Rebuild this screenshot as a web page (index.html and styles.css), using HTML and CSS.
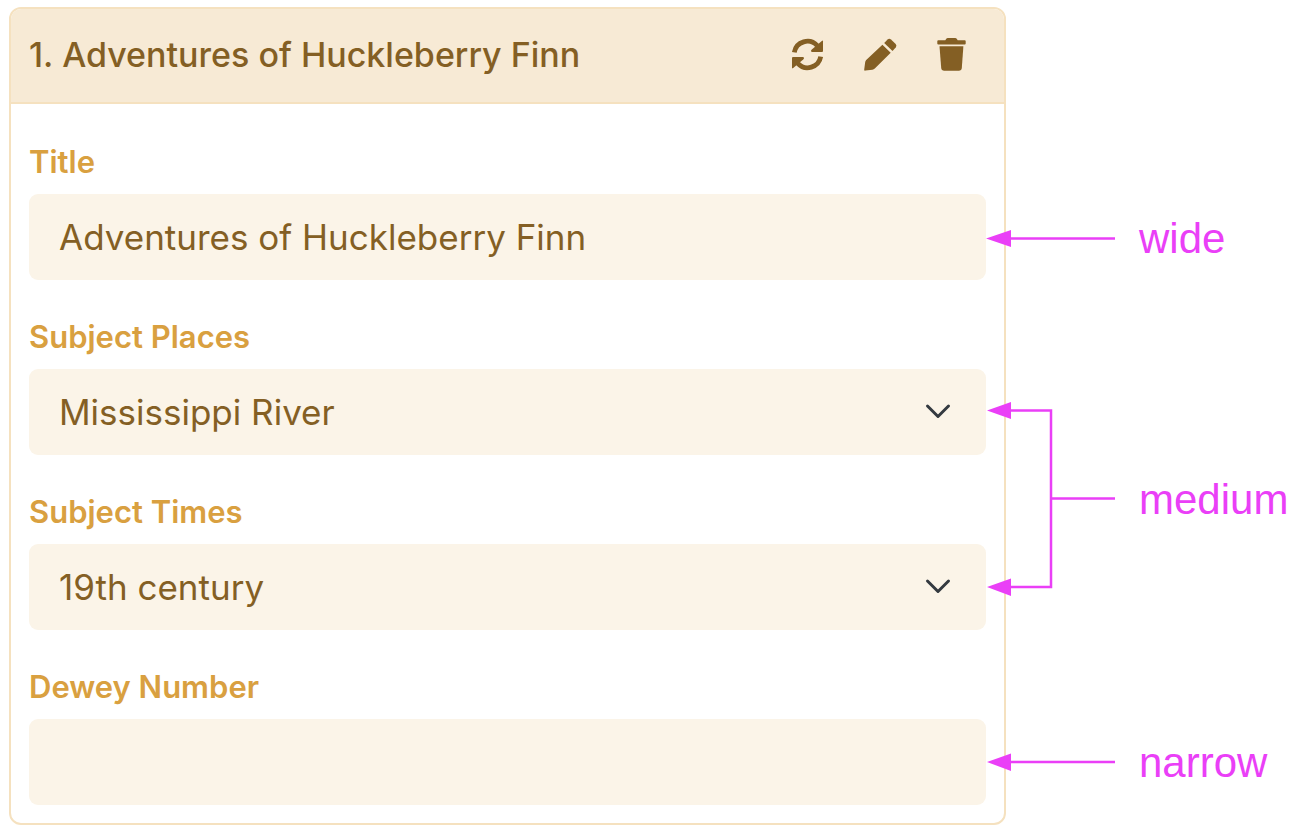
FILE: index.html
```html
<!DOCTYPE html>
<html lang="en">
<head>
<meta charset="utf-8">
<title>Adventures of Huckleberry Finn</title>
<link rel="stylesheet" href="styles.css">
</head>
<body>
<main class="page">
  <section class="card">
    <header class="card-header">
      <h1 class="card-title">1. Adventures of Huckleberry Finn</h1>
      <div class="actions">
        <button class="action" type="button" aria-label="Refresh">
          <svg viewBox="0 0 36 36" aria-hidden="true">
            <path d="M4.3 15.3A13.3 13.3 0 0 1 27.2 8.6" fill="none" stroke="currentColor" stroke-width="4.8"/>
            <path d="M31.8 4Q33 3 33 4.400V14Q33 15 32 15H22.4Q21 15 21 14Q21 13.400 21.800 12.600Z"/>
            <g transform="rotate(180 17.5 17.5)">
              <path d="M4.3 15.3A13.3 13.3 0 0 1 27.2 8.6" fill="none" stroke="currentColor" stroke-width="4.8"/>
              <path d="M31.8 4Q33 3 33 4.400V14Q33 15 32 15H22.4Q21 15 21 14Q21 13.400 21.800 12.600Z"/>
            </g>
          </svg>
        </button>
        <button class="action" type="button" aria-label="Edit">
          <svg viewBox="0 0 36 36" aria-hidden="true">
            <path d="M20.4 7.8L28.7 15.8L12.8 31.6Q11.8 32.6 10.4 32.8L3.4 33.6Q2 33.8 2.2 32.4L3.2 25Q3.4 23.8 4.2 23Z"/>
            <path d="M22.2 6L25.6 2.4Q27.3 .9 29 2.4L33.7 7.1Q35.2 8.8 33.7 10.5L30.5 14Z"/>
          </svg>
        </button>
        <button class="action" type="button" aria-label="Delete">
          <svg viewBox="0 0 36 36" aria-hidden="true">
            <path d="M4.3 3.2H11.3L12.3 1.8Q12.8 1 13.8 1H21.2Q22.2 1 22.7 1.8L23.7 3.2H30.7Q31.7 3.2 31.7 4.2V6.4Q31.7 7.4 30.7 7.4H4.3Q3.3 7.4 3.3 6.4V4.2Q3.3 3.2 4.3 3.2Z"/>
            <path d="M5.5 9.3H29.4L27.8 31Q27.5 33.8 24.8 33.8H10.2Q7.5 33.8 7.2 31Z"/>
          </svg>
        </button>
      </div>
    </header>
    <form class="fields">
      <div class="field">
        <label class="label" for="title">Title</label>
        <input class="control" id="title" type="text" value="Adventures of Huckleberry Finn">
      </div>
      <div class="field">
        <label class="label" for="places">Subject Places</label>
        <div class="select-wrap">
          <select class="control" id="places"><option>Mississippi River</option></select>
          <svg class="chevron" viewBox="0 0 26 16" aria-hidden="true"><path d="M2.5 3L13 13.5L23.5 3"/></svg>
        </div>
      </div>
      <div class="field">
        <label class="label" for="times">Subject Times</label>
        <div class="select-wrap">
          <select class="control" id="times"><option>19th century</option></select>
          <svg class="chevron" viewBox="0 0 26 16" aria-hidden="true"><path d="M2.5 3L13 13.5L23.5 3"/></svg>
        </div>
      </div>
      <div class="field">
        <label class="label" for="dewey">Dewey Number</label>
        <input class="control" id="dewey" type="text">
      </div>
    </form>
  </section>
  <aside class="notes">
    <div class="note">
      <svg class="arrow" viewBox="0 0 129 48" aria-hidden="true">
        <path class="line" d="M24 23.5H129"/><path class="head" d="M0 23.5L25 15V32Z"/>
      </svg>
      <span>wide</span>
    </div>
    <div class="note">
      <svg class="arrow arrow-fork" viewBox="0 0 129 196" aria-hidden="true">
        <path class="line" d="M24 8.5H65V185H24M65 96.5H129"/>
        <path class="head" d="M1 8.5L25 0V17ZM1 185L25 176.5V194Z"/>
      </svg>
      <span>medium</span>
    </div>
    <div class="note">
      <svg class="arrow" viewBox="0 0 129 48" aria-hidden="true">
        <path class="line" d="M24 23H129"/><path class="head" d="M1 23L25 14.5V32Z"/>
      </svg>
      <span>narrow</span>
    </div>
  </aside>
</main>
</body>
</html>
```
FILE: styles.css
```css
* { box-sizing: border-box; }

body {
  margin: 0;
  background: #fff;
  font-family: Inter, "Liberation Sans", sans-serif;
}

.page {
  display: grid;
  grid-template-columns: 1fr 314px;
  align-items: start;
  padding: 7px 0 7px 9px;
}

.card {
  margin-right: -20px;
  border: 2px solid #f5e1bf;
  border-radius: 12px;
  overflow: hidden;
}

.card-header {
  display: flex;
  align-items: center;
  justify-content: space-between;
  padding: 28px 34px 29px 18px;
  border-bottom: 2px solid #f5e1bf;
  background: #f7ead5;
  color: #845f24;
}

.card-title {
  margin: 0;
  font-size: 34px;
  font-weight: 500;
  line-height: 36px;
}

.actions { display: flex; gap: 36px; }

.action {
  width: 36px;
  height: 36px;
  padding: 0;
  border: 0;
  background: none;
  color: inherit;
}

.action svg { display: block; fill: currentColor; }

.fields {
  display: flex;
  flex-direction: column;
  gap: 33px;
  padding: 34px 18px 18px;
}

.field { display: flex; flex-direction: column; gap: 8px; }

.label {
  color: #d9a040;
  font-size: 31px;
  font-weight: 600;
  line-height: 48px;
}

.control {
  display: block;
  width: 100%;
  height: 86px;
  margin: 0;
  padding: 0 30px;
  border: 0;
  border-radius: 9px;
  appearance: none;
  background: #fbf4e8;
  color: #845f24;
  font: 400 35px Inter, "Liberation Sans", sans-serif;
}

.select-wrap { position: relative; }

.chevron {
  position: absolute;
  top: 34px;
  right: 35px;
  width: 26px;
  fill: none;
  stroke: #343a40;
  stroke-width: 3;
  stroke-linecap: round;
  stroke-linejoin: round;
  pointer-events: none;
}

.notes {
  display: flex;
  flex-direction: column;
  gap: 139px;
  padding-top: 208px;
  z-index: 1;
  color: #ea3ff7;
  font: 42px/48px "Liberation Sans", Arial, sans-serif;
}

.note { display: flex; align-items: center; gap: 24px; }
.note:last-child { padding-top: 2px; }

.arrow { flex: none; width: 129px; height: 48px; }
.arrow-fork { height: 196px; }
.line { fill: none; stroke: #ea3ff7; stroke-width: 2.5; }
.head { fill: #ea3ff7; }
```
